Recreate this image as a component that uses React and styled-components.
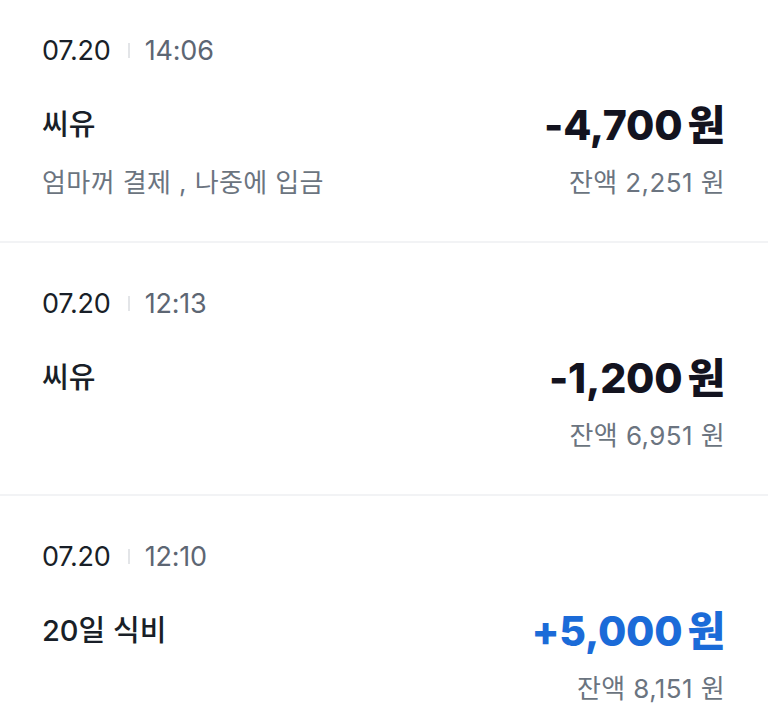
import React from "react";
import styled, { createGlobalStyle } from "styled-components";

const Global = createGlobalStyle`
  html, body { margin: 0; padding: 0; background: #ffffff; }
  body { font-family: Inter, "Noto Sans CJK KR", "Noto Sans", sans-serif; -webkit-font-smoothing: antialiased; }
`;

const List = styled.div`
  display: flex;
  flex-direction: column;
`;

const Item = styled.section`
  display: flex;
  flex-direction: column;
  padding: 44px 43px 45px 42px;
  border-bottom: 2px solid #f2f3f5;
  &:first-child { padding-top: 34px; }
`;

const DateLine = styled.div`
  display: flex;
  align-items: center;
  height: 32px;
  font-size: 27px;
  letter-spacing: -0.2px;
`;

const DateText = styled.span`
  color: #191f28;
`;

const Divider = styled.span`
  width: 2px;
  height: 15px;
  background: #e3e5e8;
  margin: 0 15px 0 17px;
`;

const TimeText = styled.span`
  color: #5d6673;
`;

const Row = styled.div`
  display: flex;
  align-items: center;
  justify-content: space-between;
  height: ${p => p.$h}px;
  margin-top: ${p => p.$mt}px;
`;

const Title = styled.span`
  font-size: 29px;
  color: #191f28;
  font-weight: 500;
`;

const Amount = styled.span`
  font-size: 41px;
  font-weight: 800;
  color: ${p => (p.$plus ? "#1b6bd8" : "#13131f")};
  letter-spacing: -0.2px;
`;

const Won = styled.span`
  margin-left: 5px;
`;

const Sub = styled.span`
  font-size: 26px;
  color: #6b7480;
  letter-spacing: 0.4px;
`;

const data = [
  { time: "14:06", title: "씨유", memo: "엄마꺼 결제 , 나중에 입금", amount: "-4,700", balance: "2,251" },
  { time: "12:13", title: "씨유", memo: "", amount: "-1,200", balance: "6,951" },
  { time: "12:10", title: "20일 식비", memo: "", amount: "+5,000", balance: "8,151", plus: true },
];

export default function App() {
  return (
    <>
      <Global />
      <List>
        {data.map((d, i) => (
          <Item key={i}>
            <DateLine>
              <DateText>07.20</DateText>
              <Divider />
              <TimeText>{d.time}</TimeText>
            </DateLine>
            <Row $h={44} $mt={34}>
              <Title>{d.title}</Title>
              <Amount $plus={d.plus}>
                {d.amount}
                <Won>원</Won>
              </Amount>
            </Row>
            <Row $h={32} $mt={20}>
              <Sub>{d.memo}</Sub>
              <Sub>잔액 {d.balance} 원</Sub>
            </Row>
          </Item>
        ))}
      </List>
    </>
  );
}
